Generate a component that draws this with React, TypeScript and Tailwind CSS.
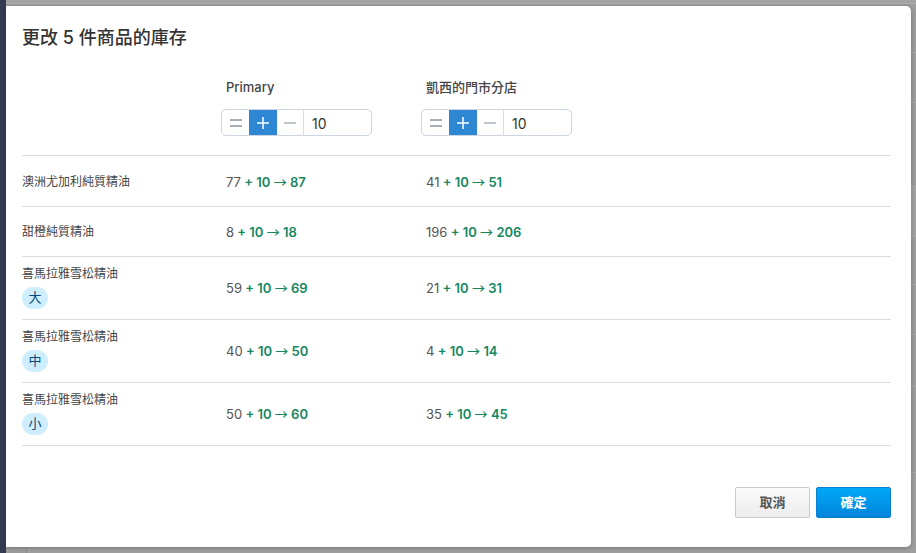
import React from "react";

function Stepper() {
  return (
    <div className="-ml-[5px] flex h-[27px] w-[151px] overflow-hidden rounded-[5px] border border-[#cbd6e2] bg-white">
      <div className="flex w-[27px] items-center justify-center">
        <svg width="14" height="10" viewBox="0 0 14 10">
          <line x1="1" y1="2" x2="13" y2="2" stroke="#8a94a0" strokeWidth="1.5" />
          <line x1="1" y1="8" x2="13" y2="8" stroke="#8a94a0" strokeWidth="1.5" />
        </svg>
      </div>
      <div className="flex w-[28px] items-center justify-center bg-[#2e87d3]">
        <svg width="14" height="14" viewBox="0 0 14 14">
          <line x1="1" y1="7" x2="13" y2="7" stroke="#ffffff" strokeWidth="1.5" />
          <line x1="7" y1="1" x2="7" y2="13" stroke="#ffffff" strokeWidth="1.5" />
        </svg>
      </div>
      <div className="flex w-[27px] items-center justify-center border-r border-[#d6dee7]">
        <svg width="14" height="14" viewBox="0 0 14 14">
          <line x1="1" y1="7" x2="13" y2="7" stroke="#aab3bd" strokeWidth="1.5" />
        </svg>
      </div>
      <div className="flex flex-1 items-center pl-[8px] pt-[1px] text-[14px] text-[#333]">10</div>
    </div>
  );
}

function Change({ from, to }: { from: number; to: number }) {
  return (
    <div className="text-[13px] leading-[18px]">
      <span className="text-[#555]">{from}</span>
      <span className="font-semibold text-[#15875f]">
        {" "}+ 10{" "}
        <span className="font-['Noto_Sans_CJK_TC',sans-serif] font-medium">→</span>{" "}
        {to}
      </span>
    </div>
  );
}

type Row = { name: string; badge?: string; a: [number, number]; b: [number, number] };

const rows: Row[] = [
  { name: "澳洲尤加利純質精油", a: [77, 87], b: [41, 51] },
  { name: "甜橙純質精油", a: [8, 18], b: [196, 206] },
  { name: "喜馬拉雅雪松精油", badge: "大", a: [59, 69], b: [21, 31] },
  { name: "喜馬拉雅雪松精油", badge: "中", a: [40, 50], b: [4, 14] },
  { name: "喜馬拉雅雪松精油", badge: "小", a: [50, 60], b: [35, 45] },
];

export default function App() {
  return (
    <div className="relative h-[553px] w-[916px] overflow-hidden bg-[#9c9c9c] font-['Inter','Noto_Sans_CJK_TC',sans-serif]">
      {/* page behind overlay */}
      <div className="flex h-full w-full">
        <div className="h-full w-[6px] bg-[#353a50]" />
        <div className="flex flex-1 flex-col">
          <div className="h-[4px] border-b border-[#b0b0b0] bg-[#a2a2a2]" />
          <div className="h-[49px] border-b border-[#a8a8a8]" />
          <div className="h-[50px] border-b border-[#a8a8a8]" />
          <div className="h-[84px] border-b border-[#a8a8a8]" />
          <div className="h-[50px] border-b border-[#a8a8a8] bg-[#a1a1a1]" />
          <div className="h-[48px] border-b border-[#a8a8a8]" />
          <div className="h-[50px] border-b border-[#a8a8a8]" />
          <div className="h-[52px] border-b border-[#a8a8a8]" />
          <div className="h-[86px] border-b border-[#a8a8a8]" />
          <div className="ml-[20px] flex-1 border-l border-[#8d8d8d] bg-[#9e9e9e]" />
        </div>
      </div>

      {/* modal */}
      <div className="absolute left-[6px] top-[6px] flex h-[541px] w-[905px] flex-col rounded-r-[5px] bg-white pl-[16px] pr-[20px] pt-[20px] shadow-[0_1px_4px_rgba(0,0,0,0.25)]">
        <div className="text-[18px] font-medium leading-[24px] text-[#333]">更改 5 件商品的庫存</div>

        <div className="grid grid-cols-[204px_200px_1fr] pb-[19px]">
          <div />
          <div className="flex flex-col">
            <div className="mt-[28px] text-[13px] font-medium leading-[18px] text-[#444]">Primary</div>
            <div className="mt-[13px]">
              <Stepper />
            </div>
          </div>
          <div className="flex flex-col">
            <div className="mt-[28px] text-[13px] font-medium leading-[18px] text-[#444]">凱西的門市分店</div>
            <div className="mt-[13px]">
              <Stepper />
            </div>
          </div>
        </div>

        <div className="border-t border-[#dcdcdc]">
          {rows.map((r, i) => (
            <div
              key={i}
              className={
                "grid grid-cols-[204px_200px_1fr] items-center border-b border-[#dcdcdc] " +
                (r.badge ? "h-[63px]" : i === 0 ? "h-[51px] pt-[1px]" : "h-[50px]")
              }
            >
              <div className={r.badge ? "flex flex-col items-start pb-[2px]" : ""}>
                <div className="text-[12px] leading-[18px] text-[#444]">{r.name}</div>
                {r.badge && (
                  <div className="mt-[4px] flex h-[22px] w-[26px] items-center justify-center rounded-full bg-[#cfeefd] text-[13px] text-[#0b4a78]">
                    {r.badge}
                  </div>
                )}
              </div>
              <Change from={r.a[0]} to={r.a[1]} />
              <Change from={r.b[0]} to={r.b[1]} />
            </div>
          ))}
        </div>

        <div className="mt-[41px] flex justify-end gap-[6px]">
          <button className="flex h-[31px] w-[75px] items-center justify-center rounded-[2px] border border-[#c9c9c9] bg-gradient-to-b from-[#fbfbfb] to-[#ececec] text-[13px] font-semibold text-[#555]">
            取消
          </button>
          <button className="flex h-[31px] w-[75px] items-center justify-center rounded-[2px] border border-[#0a80d0] bg-gradient-to-b from-[#00a8f6] to-[#0085db] text-[13px] font-semibold text-white">
            確定
          </button>
        </div>
      </div>
    </div>
  );
}
